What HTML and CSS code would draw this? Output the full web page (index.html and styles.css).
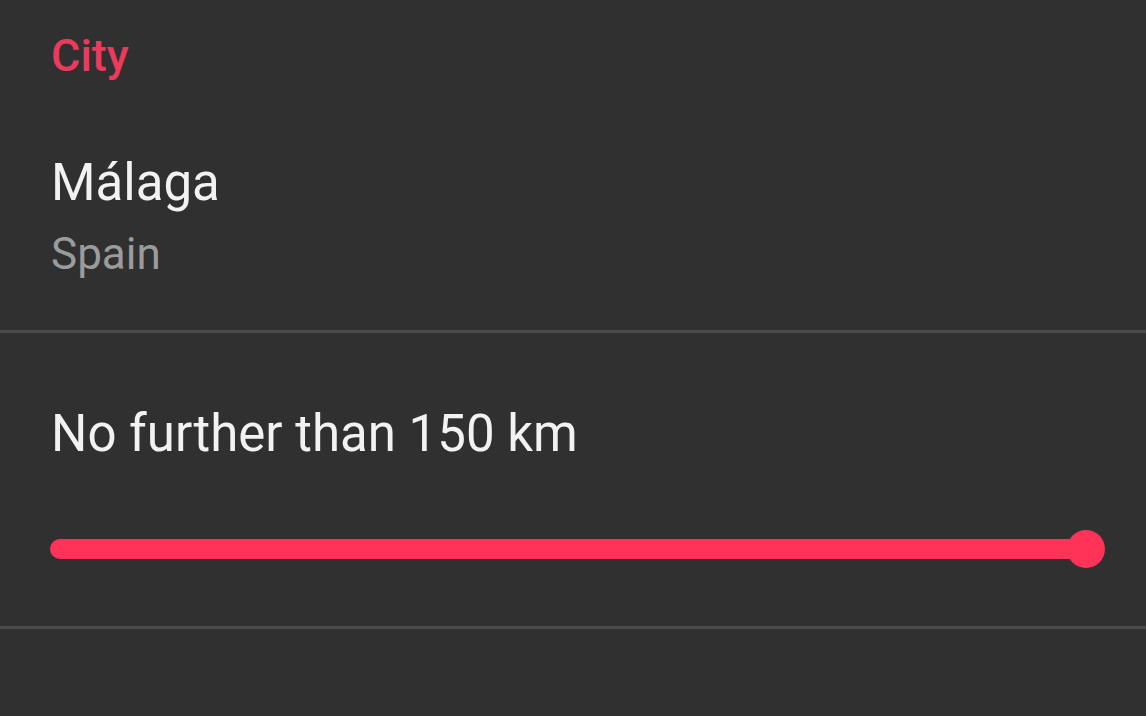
FILE: index.html
```html
<!DOCTYPE html>
<html lang="en">
<head>
    <meta charset="UTF-8">
    <meta name="viewport" content="width=device-width, initial-scale=1.0">
    <title>Location preferences</title>
    <link rel="stylesheet" href="styles.css">
</head>
<body>
    <section class="pref-category">
        <h2 class="category-title">City</h2>
        <div class="pref-item">
            <div class="pref-title">Málaga</div>
            <div class="pref-summary">Spain</div>
        </div>
    </section>

    <section class="pref-distance">
        <div class="pref-title">No further than 150 km</div>
        <div class="slider">
            <div class="slider-track"></div>
            <div class="slider-thumb"></div>
        </div>
    </section>
</body>
</html>
```

FILE: styles.css
```css
body { margin: 0; background: #303030; font-family: Roboto, "Liberation Sans", sans-serif; color: #f2f2f2; }
.pref-category { padding: 30px 0 50px 51px; border-bottom: 3px solid #4a4a4a; }
.category-title { margin: 0; font-size: 45px; line-height: 52px; font-weight: 500; color: #ea3a5e; }
.pref-item { margin-top: 71px; }
.pref-title { font-size: 51px; line-height: 60px; }
.pref-summary { margin-top: 15px; font-size: 44px; line-height: 52px; color: #9b9b9b; }
.pref-distance { padding: 71px 0 58px 0; border-bottom: 3px solid #4a4a4a; }
.pref-distance .pref-title { padding-left: 51px; }
.slider { display: flex; align-items: center; height: 38px; margin: 66px 41px 0 50px; }
.slider-track { flex: 1; height: 20px; border-radius: 10px; background: #ff3358; }
.slider-thumb { width: 38px; height: 38px; margin-left: -28px; border-radius: 50%; background: #ff3358; }
```
